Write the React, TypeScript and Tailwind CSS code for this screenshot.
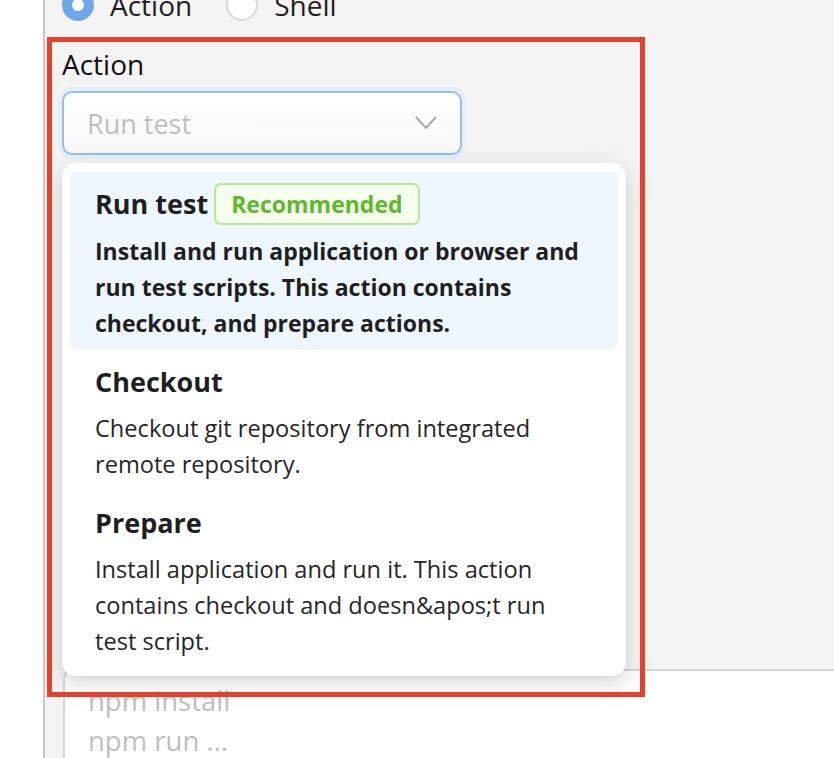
import React from "react";

type ActionOption = {
  title: string;
  desc: string;
  recommended?: boolean;
};

const options: ActionOption[] = [
  {
    title: "Run test",
    desc: "Install and run application or browser and run test scripts. This action contains checkout, and prepare actions.",
    recommended: true,
  },
  {
    title: "Checkout",
    desc: "Checkout git repository from integrated remote repository.",
  },
  {
    title: "Prepare",
    desc: "Install application and run it. This action contains checkout and doesn&apos;t run test script.",
  },
];

const font = { fontFamily: "'Open Sans', 'Noto Sans', sans-serif" };

const App: React.FC = () => {
  return (
    <div
      className="relative flex w-[834px] h-[758px] overflow-hidden bg-white"
      style={font}
    >
      <div className="w-[43px] shrink-0 bg-white" />

      <div className="flex-1 border-l-2 border-[#c8c8c8] bg-[#f4f4f4] pl-[17px]">
        {/* type radios */}
        <div className="-mt-[13px] flex h-[36px] items-center text-[28px] text-[#1f1f1f]">
          <span className="flex h-[32px] w-[32px] items-center justify-center rounded-full bg-[#6fa8ea]">
            <span className="h-[12px] w-[12px] rounded-full bg-white" />
          </span>
          <span className="ml-[16px]">Action</span>
          <span className="ml-[34px] h-[32px] w-[32px] rounded-full border-2 border-[#d9d9d9] bg-white" />
          <span className="ml-[16px]">Shell</span>
        </div>

        <div className="mt-[21px] flex h-[40px] items-center text-[28px] text-[#111]">
          Action
        </div>

        <div className="relative mt-[7px] w-[400px]">
          <div className="flex h-[64px] items-center justify-between rounded-[10px] border-2 border-[#8fc1f2] bg-gradient-to-b from-white to-[#f7f7f7] pl-[23px] pr-[23px] shadow-[0_0_0_4px_#e8eef5]">
            <span className="pt-[3px] text-[27px] text-[#bfbfbf]">Run test</span>
            <svg width="22" height="14" viewBox="0 0 22 14" fill="none">
              <polyline
                points="1.5,1.5 11,12 20.5,1.5"
                stroke="#a9a9a9"
                strokeWidth="2"
                strokeLinecap="round"
                strokeLinejoin="round"
              />
            </svg>
          </div>

          {/* dropdown menu */}
          <div className="absolute left-0 top-full z-10 mt-[8px] w-[564px] rounded-[14px] bg-white p-[8px] shadow-[0_6px_16px_0_rgba(0,0,0,0.08),0_3px_6px_-4px_rgba(0,0,0,0.12),0_9px_28px_8px_rgba(0,0,0,0.05)]">
            {options.map((opt) => (
              <div
                key={opt.title}
                className={
                  opt.recommended
                    ? "rounded-[8px] bg-[#eff7fe] py-[9px] pl-[25px] pr-[33px]"
                    : "rounded-[8px] py-[9px] pl-[25px] pr-[33px]"
                }
              >
                <div
                  className={
                    opt.recommended
                      ? "flex h-[48px] items-center gap-[6px]"
                      : "flex h-[46px] items-center"
                  }
                >
                  <span className="text-[27px] font-bold text-[#1f1f1f]">
                    {opt.title}
                  </span>
                  {opt.recommended && (
                    <span className="flex h-[42px] items-center rounded-[7px] border-2 border-[#b7eb8f] bg-[#f6ffed] px-[15px] text-[23px] font-bold text-[#5fb92b]">
                      Recommended
                    </span>
                  )}
                </div>
                <p
                  className={
                    opt.recommended
                      ? "mt-[5px] text-[23px] font-bold leading-[36px] text-[#1f1f1f]"
                      : "mt-[5px] text-[23.6px] leading-[36px] text-[#262626]"
                  }
                >
                  {opt.desc}
                </p>
              </div>
            ))}
          </div>
        </div>

        {/* script textarea */}
        <div className="ml-[1px] mt-[514px] h-[140px] w-[800px] rounded-[10px] border-2 border-[#d6d6d6] bg-white px-[23px] pt-[10px] text-[27.5px] leading-[40px] text-[#bfbfbf]">
          <div>npm install</div>
          <div>npm run ...</div>
        </div>
      </div>

      {/* annotation frame */}
      <div className="pointer-events-none absolute left-[47px] top-[37px] z-20 h-[660px] w-[598px] border-[5px] border-[#e8402a]" />
    </div>
  );
};

export default App;
